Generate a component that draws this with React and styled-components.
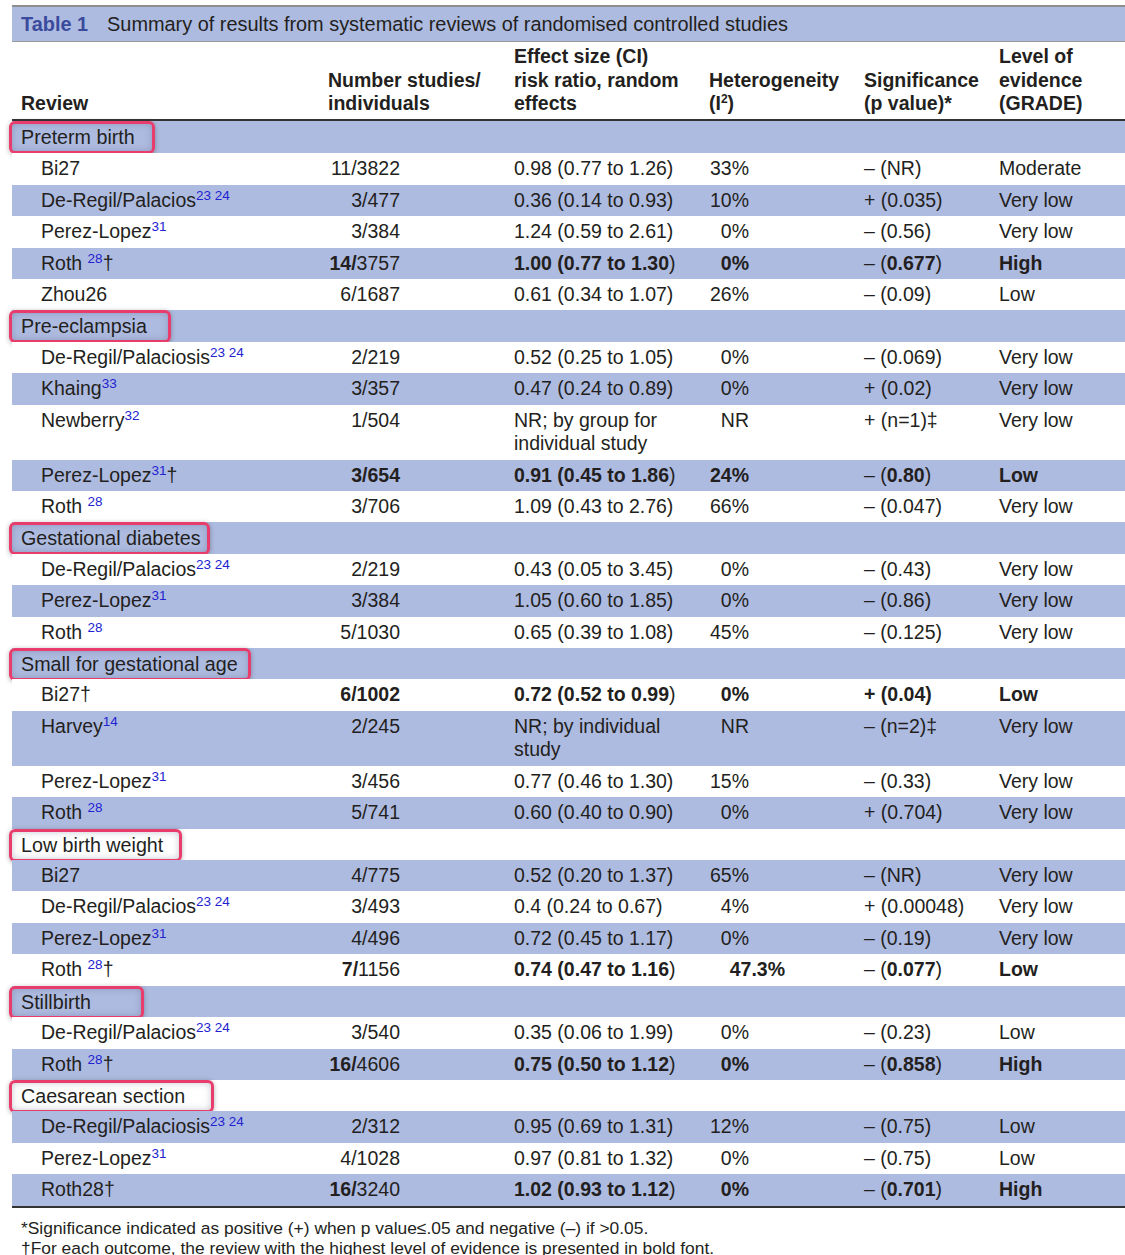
import React from "react"
import styled, { createGlobalStyle } from "styled-components"

const Global = createGlobalStyle`
  body {
    margin: 0;
    background: #fff;
    font-family: "Liberation Sans", Arial, sans-serif;
    color: #231f20;
  }
`

const BLUE = "#aebbe0"

const Page = styled.div`
  width: 1113px;
  padding: 5px 0 0 12px;
`

const TitleBar = styled.div`
  display: flex;
  align-items: center;
  gap: 19px;
  height: 34px;
  padding-left: 9px;
  background: ${BLUE};
  border-top: 2px solid #8e8e8e;
  border-bottom: 1px solid #9a9a9a;
  font-size: 19.9px;
`

const TableNo = styled.span`
  font-weight: 700;
  color: #3a4a9c;
`

const Table = styled.table`
  width: 1113px;
  table-layout: fixed;
  border-collapse: collapse;
  font-size: 19.5px;
  line-height: 23.42px;
  border-bottom: 2px solid #333;
`

const Col = styled.col`
  width: ${(p) => p.$w}px;
`

const Head = styled.th`
  text-align: left;
  vertical-align: bottom;
  font-weight: 700;
  line-height: 23.5px;
  padding: 3px 0 3px ${(p) => p.$pl || 9}px;
  border-bottom: 2px solid #333;
`

const Row = styled.tr`
  background: ${(p) => (p.$shade ? BLUE : "#fff")};
`

const Cell = styled.td`
  vertical-align: top;
  padding: 4px ${(p) => p.$pr || 0}px 4px ${(p) => p.$pl || 0}px;
  text-align: ${(p) => p.$align || "left"};
`

const SectionCell = styled.td`
  padding: 0;
  vertical-align: top;
`

const Label = styled.div`
  box-sizing: border-box;
  width: ${(p) => p.$w}px;
  height: 33px;
  margin: 0 0 ${(p) => (p.$first ? -0.2 : -1.58)}px -3px;
  padding-left: 9px;
  line-height: 27px;
  font-size: 19.7px;
  border: 3px solid #e83d6c;
  border-radius: 6px;
  white-space: nowrap;
  box-shadow: 0 1px 5px rgba(0, 0, 0, 0.3), inset 0 0 7px rgba(60, 60, 90, 0.28);
`

const Ref = styled.sup`
  font-size: 13.5px;
  line-height: 0;
  vertical-align: 7px;
  color: #2222d0;
`

const HeadSup = styled.sup`
  font-size: 12px;
  line-height: 0;
`

const B = styled.b`
  font-weight: 700;
`

const Shift = styled.span`
  display: inline-block;
  margin-right: -36px;
`

const Notes = styled.div`
  padding: 10px 0 0 9px;
  font-size: 17.4px;
  line-height: 20px;
`

const r = (name, ref, dag, n, eff, het, sig, lvl) => ({ name, ref, dag, n, eff, het, sig, lvl })

const sections = [
  {
    title: "Preterm birth",
    w: 146,
    rows: [
      r("Bi27", null, false, "11/3822", "0.98 (0.77 to 1.26)", "33%", "– (NR)", "Moderate"),
      r("De-Regil/Palacios", "23 24", false, "3/477", "0.36 (0.14 to 0.93)", "10%", "+ (0.035)", "Very low"),
      r("Perez-Lopez", "31", false, "3/384", "1.24 (0.59 to 2.61)", "0%", "– (0.56)", "Very low"),
      r("Roth ", "28", true, <><B>14/</B>3757</>, <><B>1.00 (0.77 to 1.30</B>)</>, <B>0%</B>, <>– (<B>0.677</B>)</>, <B>High</B>),
      r("Zhou26", null, false, "6/1687", "0.61 (0.34 to 1.07)", "26%", "– (0.09)", "Low"),
    ],
  },
  {
    title: "Pre-eclampsia",
    w: 162,
    rows: [
      r("De-Regil/Palaciosis", "23 24", false, "2/219", "0.52 (0.25 to 1.05)", "0%", "– (0.069)", "Very low"),
      r("Khaing", "33", false, "3/357", "0.47 (0.24 to 0.89)", "0%", "+ (0.02)", "Very low"),
      r("Newberry", "32", false, "1/504", "NR; by group for individual study", "NR", "+ (n=1)‡", "Very low"),
      r("Perez-Lopez", "31", true, <B>3/654</B>, <><B>0.91 (0.45 to 1.86</B>)</>, <B>24%</B>, <>– (<B>0.80</B>)</>, <B>Low</B>),
      r("Roth ", "28", false, "3/706", "1.09 (0.43 to 2.76)", "66%", "– (0.047)", "Very low"),
    ],
  },
  {
    title: "Gestational diabetes",
    w: 201,
    rows: [
      r("De-Regil/Palacios", "23 24", false, "2/219", "0.43 (0.05 to 3.45)", "0%", "– (0.43)", "Very low"),
      r("Perez-Lopez", "31", false, "3/384", "1.05 (0.60 to 1.85)", "0%", "– (0.86)", "Very low"),
      r("Roth ", "28", false, "5/1030", "0.65 (0.39 to 1.08)", "45%", "– (0.125)", "Very low"),
    ],
  },
  {
    title: "Small for gestational age",
    w: 242,
    rows: [
      r("Bi27", null, true, <B>6/1002</B>, <><B>0.72 (0.52 to 0.99</B>)</>, <B>0%</B>, <B>+ (0.04)</B>, <B>Low</B>),
      r("Harvey", "14", false, "2/245", "NR; by individual study", "NR", "– (n=2)‡", "Very low"),
      r("Perez-Lopez", "31", false, "3/456", "0.77 (0.46 to 1.30)", "15%", "– (0.33)", "Very low"),
      r("Roth ", "28", false, "5/741", "0.60 (0.40 to 0.90)", "0%", "+ (0.704)", "Very low"),
    ],
  },
  {
    title: "Low birth weight",
    w: 173,
    rows: [
      r("Bi27", null, false, "4/775", "0.52 (0.20 to 1.37)", "65%", "– (NR)", "Very low"),
      r("De-Regil/Palacios", "23 24", false, "3/493", "0.4 (0.24 to 0.67)", "4%", "+ (0.00048)", "Very low"),
      r("Perez-Lopez", "31", false, "4/496", "0.72 (0.45 to 1.17)", "0%", "– (0.19)", "Very low"),
      r("Roth ", "28", true, <><B>7/</B>1156</>, <><B>0.74 (0.47 to 1.16</B>)</>, <Shift><B>47.3%</B></Shift>, <>– (<B>0.077</B>)</>, <B>Low</B>),
    ],
  },
  {
    title: "Stillbirth",
    w: 135,
    rows: [
      r("De-Regil/Palacios", "23 24", false, "3/540", "0.35 (0.06 to 1.99)", "0%", "– (0.23)", "Low"),
      r("Roth ", "28", true, <><B>16/</B>4606</>, <><B>0.75 (0.50 to 1.12</B>)</>, <B>0%</B>, <>– (<B>0.858</B>)</>, <B>High</B>),
    ],
  },
  {
    title: "Caesarean section",
    w: 205,
    rows: [
      r("De-Regil/Palaciosis", "23 24", false, "2/312", "0.95 (0.69 to 1.31)", "12%", "– (0.75)", "Low"),
      r("Perez-Lopez", "31", false, "4/1028", "0.97 (0.81 to 1.32)", "0%", "– (0.75)", "Low"),
      r("Roth28", null, true, <><B>16/</B>3240</>, <><B>1.02 (0.93 to 1.12</B>)</>, <B>0%</B>, <>– (<B>0.701</B>)</>, <B>High</B>),
    ],
  },
]

function Body() {
  let i = 0
  const out = []
  sections.forEach((s, si) => {
    out.push(
      <Row key={s.title} $shade={i++ % 2 === 0}>
        <SectionCell colSpan={6}>
          <Label $w={s.w} $first={si === 0}>{s.title}</Label>
        </SectionCell>
      </Row>
    )
    s.rows.forEach((d, k) => {
      out.push(
        <Row key={s.title + k} $shade={i++ % 2 === 0}>
          <Cell $pl={29}>
            {d.name}
            {d.ref && <Ref>{d.ref}</Ref>}
            {d.dag && "†"}
          </Cell>
          <Cell $align="right" $pr={105}>{d.n}</Cell>
          <Cell $pl={9}>{d.eff}</Cell>
          <Cell $align="right" $pr={106}>{d.het}</Cell>
          <Cell $pl={9}>{d.sig}</Cell>
          <Cell $pl={9}>{d.lvl}</Cell>
        </Row>
      )
    })
  })
  return <tbody>{out}</tbody>
}

export default function App() {
  return (
    <Page>
      <Global />
      <TitleBar>
        <TableNo>Table 1</TableNo>
        <span>Summary of results from systematic reviews of randomised controlled studies</span>
      </TitleBar>
      <Table>
        <colgroup>
          <Col $w={308} />
          <Col $w={185} />
          <Col $w={195} />
          <Col $w={155} />
          <Col $w={135} />
          <Col $w={135} />
        </colgroup>
        <thead>
          <tr>
            <Head>Review</Head>
            <Head $pl={8}>Number studies/<br />individuals</Head>
            <Head>Effect size (CI)<br />risk ratio, random<br />effects</Head>
            <Head>Heterogeneity<br />(I<HeadSup>2</HeadSup>)</Head>
            <Head>Significance<br />(p value)*</Head>
            <Head>Level of<br />evidence<br />(GRADE)</Head>
          </tr>
        </thead>
        <Body />
      </Table>
      <Notes>
        *Significance indicated as positive (+) when p value≤.05 and negative (–) if &gt;0.05.
        <br />
        †For each outcome, the review with the highest level of evidence is presented in bold font.
      </Notes>
    </Page>
  )
}
